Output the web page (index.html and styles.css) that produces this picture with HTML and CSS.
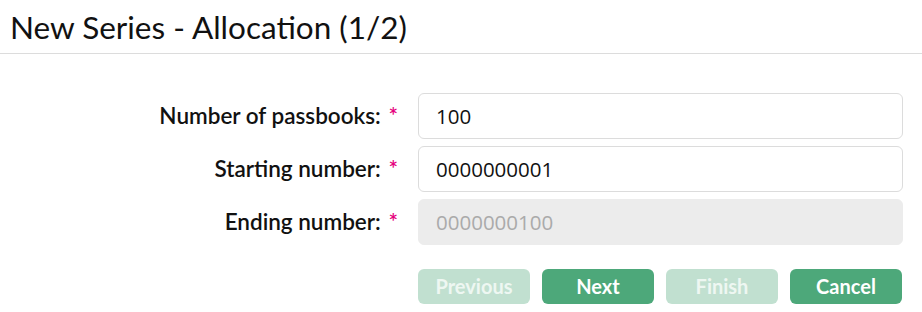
FILE: index.html
```html
<!DOCTYPE html>
<html lang="en">
    <head>
        <meta charset="UTF-8" />
        <title>New Series - Allocation</title>
        <link rel="stylesheet" href="styles.css">
    </head>
    <body>
        <div class="page-header">
            <h1>New Series - Allocation (1/2)</h1>
        </div>
        <form class="wizard-form">
            <label class="field-label" for="count">Number of passbooks: <span class="req">*</span></label>
            <input class="field-input" id="count" type="text" value="100" />

            <label class="field-label" for="start">Starting number: <span class="req">*</span></label>
            <input class="field-input" id="start" type="text" value="0000000001" />

            <label class="field-label" for="end">Ending number: <span class="req">*</span></label>
            <input class="field-input" id="end" type="text" value="0000000100" disabled />

            <div class="actions">
                <button type="button" class="btn" disabled>Previous</button>
                <button type="button" class="btn">Next</button>
                <button type="button" class="btn" disabled>Finish</button>
                <button type="button" class="btn">Cancel</button>
            </div>
        </form>
    </body>
</html>
```
FILE: styles.css
```css
* {
    box-sizing: border-box;
}
body {
    margin: 0;
    font-family: Lato, "Open Sans", sans-serif;
    color: #111;
    background: #fff;
}
.page-header {
    height: 54px;
    border-bottom: 1px solid #dcdcdc;
    padding: 0 10px;
}
.page-header h1 {
    margin: 0;
    font-size: 31.5px;
    font-weight: 400;
    line-height: 54px;
    padding-bottom: 2px;
}
.wizard-form {
    display: grid;
    grid-template-columns: 1fr 485px;
    column-gap: 20px;
    row-gap: 7px;
    padding: 39px 19px 0 0;
}
.field-label {
    text-align: right;
    align-self: center;
    font-size: 22.5px;
    font-weight: 600;
    padding-bottom: 2px;
}
.req {
    color: #e5007d;
    margin-left: 2px;
}
.field-input {
    height: 46px;
    border: 1px solid #dcdcdc;
    border-radius: 6px;
    padding: 0 17px;
    font-family: "Open Sans", sans-serif;
    font-size: 20.5px;
    color: #111;
    background: #fff;
}
.field-input:disabled {
    background: #ececec;
    border-color: #ececec;
    color: #aaa;
}
.actions {
    grid-column: 2;
    display: flex;
    gap: 12px;
    margin-top: 17px;
}
.btn {
    width: 112px;
    height: 35px;
    border: none;
    border-radius: 6px;
    background: #4da87a;
    color: #fff;
    font-family: Lato, sans-serif;
    font-size: 20px;
    font-weight: 700;
    padding: 0 0 2px;
}
.btn:disabled {
    background: #c1e0d0;
    color: #eef7f2;
}
```
